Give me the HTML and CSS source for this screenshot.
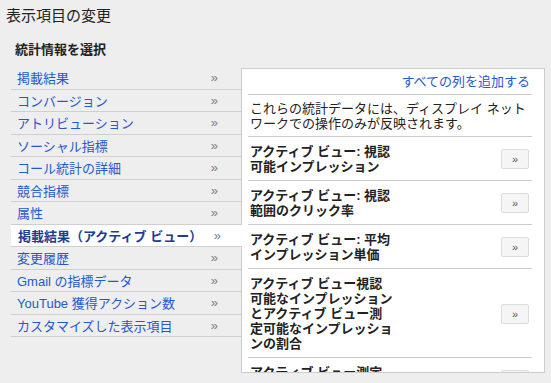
FILE: index.html
```
<!DOCTYPE html>
<html lang="ja">
<head>
<meta charset="utf-8">
<title>表示項目の変更</title>
<link rel="stylesheet" href="styles.css">
</head>
<body>
<div class="page">
  <h1 class="title">表示項目の変更</h1>
  <h2 class="subtitle">統計情報を選択</h2>
  <div class="chooser">
    <ul class="cats">
      <li class="cat"><span class="cat-name">掲載結果</span><span class="chev">»</span></li>
      <li class="cat"><span class="cat-name">コンバージョン</span><span class="chev">»</span></li>
      <li class="cat"><span class="cat-name">アトリビューション</span><span class="chev">»</span></li>
      <li class="cat"><span class="cat-name">ソーシャル指標</span><span class="chev">»</span></li>
      <li class="cat"><span class="cat-name">コール統計の詳細</span><span class="chev">»</span></li>
      <li class="cat"><span class="cat-name">競合指標</span><span class="chev">»</span></li>
      <li class="cat"><span class="cat-name">属性</span><span class="chev">»</span></li>
      <li class="cat cat-selected"><span class="cat-name">掲載結果（アクティブ ビュー）</span><span class="chev">»</span></li>
      <li class="cat"><span class="cat-name">変更履歴</span><span class="chev">»</span></li>
      <li class="cat"><span class="cat-name">Gmail の指標データ</span><span class="chev">»</span></li>
      <li class="cat"><span class="cat-name">YouTube 獲得アクション数</span><span class="chev">»</span></li>
      <li class="cat"><span class="cat-name">カスタマイズした表示項目</span><span class="chev">»</span></li>
    </ul>
    <div class="panel">
      <div class="add-all"><a class="link" href="#">すべての列を追加する</a></div>
      <p class="note">これらの統計データには、ディスプレイ ネット<br>ワークでの操作のみが反映されます。</p>
      <div class="metric">
        <span class="metric-name">アクティブ ビュー: 視認<br>可能インプレッション</span>
        <button class="add-btn" type="button">»</button>
      </div>
      <div class="metric">
        <span class="metric-name">アクティブ ビュー: 視認<br>範囲のクリック率</span>
        <button class="add-btn" type="button">»</button>
      </div>
      <div class="metric">
        <span class="metric-name">アクティブ ビュー: 平均<br>インプレッション単価</span>
        <button class="add-btn" type="button">»</button>
      </div>
      <div class="metric">
        <span class="metric-name">アクティブ ビュー視認<br>可能なインプレッション<br>とアクティブ ビュー測<br>定可能なインプレッショ<br>ンの割合</span>
        <button class="add-btn" type="button">»</button>
      </div>
      <div class="metric">
        <span class="metric-name">アクティブ ビュー測定<br>可能なインプレッション</span>
        <button class="add-btn" type="button">»</button>
      </div>
    </div>
  </div>
</div>
</body>
</html>
```
FILE: styles.css
```
html, body {
  margin: 0;
  padding: 0;
  background: #eeeeee;
  font-family: "Liberation Sans", "Noto Sans CJK JP", sans-serif;
  color: #222222;
}

.page {
  padding-top: 6px;
}

.title {
  margin: 0 0 0 6px;
  font-size: 15px;
  line-height: 20px;
  font-weight: normal;
  color: #222222;
}

.subtitle {
  margin: 16px 0 0 15px;
  font-size: 13px;
  line-height: 16px;
  font-weight: bold;
  color: #222222;
}

.chooser {
  display: flex;
  align-items: flex-start;
  margin-top: 9px;
}

.cats {
  list-style: none;
  margin: 0 0 0 11px;
  padding: 0;
  width: 230px;
  flex: none;
}

.cat {
  display: flex;
  justify-content: space-between;
  align-items: center;
  height: 21.5px;
  border-bottom: 1px solid #cfcfcf;
  padding: 0 23px 0 6px;
  font-size: 13px;
  color: #2458d3;
}

.cat-name {
  white-space: nowrap;
}

.chev {
  color: #808080;
  font-size: 13px;
}

.cat-selected {
  position: relative;
  z-index: 1;
  background: #ffffff;
  margin-right: -1px;
  padding-left: 7px;
  padding-right: 21px;
  font-weight: bold;
  color: #1f3c94;
}

.cat-selected .chev {
  font-weight: normal;
}

.panel {
  flex: none;
  margin-top: 1px;
  width: 284px;
  height: 303px;
  padding: 0 12px 0 6px;
  background: #ffffff;
  border: 1px solid #cccccc;
  overflow: hidden;
}

.add-all {
  text-align: right;
  padding: 5px 2px 4px;
  font-size: 13px;
  line-height: 16px;
  border-bottom: 1px solid #cccccc;
}

.link {
  color: #2458d3;
  text-decoration: none;
}

.note {
  margin: 0;
  padding: 6px 2px 5px;
  font-size: 13px;
  line-height: 15px;
  border-bottom: 1px solid #cccccc;
  white-space: nowrap;
}

.metric {
  display: flex;
  justify-content: space-between;
  align-items: center;
  padding: 7px 3px 6px 2px;
  border-bottom: 1px solid #cccccc;
}

.metric-name {
  font-size: 13px;
  line-height: 15px;
  font-weight: bold;
  color: #222222;
  white-space: nowrap;
}

.add-btn {
  width: 28px;
  height: 20px;
  padding: 0;
  margin: 0;
  background: #f5f5f5;
  border: 1px solid #dcdcdc;
  border-radius: 2px;
  color: #555555;
  font-family: "Liberation Sans", sans-serif;
  font-size: 11px;
  line-height: 18px;
}
```
